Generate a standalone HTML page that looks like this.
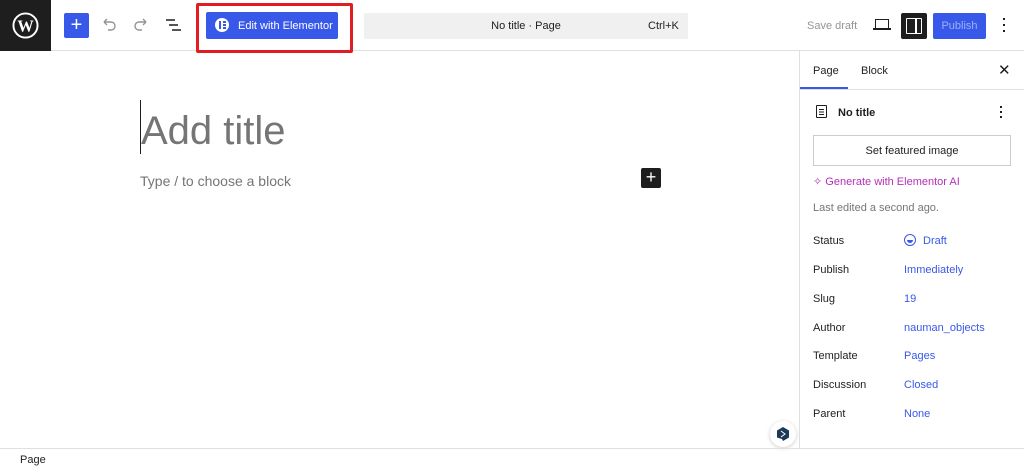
<!DOCTYPE html>
<html><head><style>
*{box-sizing:border-box;margin:0;padding:0}
body{width:1024px;height:468px;overflow:hidden;background:#fff;font-family:"Liberation Sans",sans-serif;color:#1e1e1e;position:relative}
.a{position:absolute}
.top{left:0;top:0;width:1024px;height:51px;border-bottom:1px solid #e0e0e0}
.side{left:799px;top:51px;width:1px;height:397px;background:#e0e0e0}
.foot{left:0;top:448px;width:1024px;height:1px;background:#e0e0e0}
.lbl{font-size:11px;color:#1e1e1e}
.val{font-size:11px;color:#3858e9}
</style></head><body>
<div class="a top"></div>
<div class="a" style="left:0;top:0;width:51px;height:51px;background:#1e1e1e"></div>
<svg class="a" style="left:12px;top:12px" width="27" height="27" viewBox="0 0 28 28"><circle cx="14" cy="14" r="12.5" fill="none" stroke="#fff" stroke-width="2"/><text x="14" y="20" fill="#fff" font-size="17" font-weight="bold" text-anchor="middle" font-family="Liberation Serif">W</text></svg>
<div class="a" style="left:64px;top:13px;width:25px;height:25px;background:#3858e9;border-radius:2px;color:#fff;font-size:20px;line-height:24px;text-align:center">+</div>
<svg class="a" style="left:100px;top:16px" width="18" height="18" viewBox="0 0 18 18"><path d="M4 6h7a4 4 0 010 8H8M4 6l3-3M4 6l3 3" stroke="#949494" stroke-width="1.4" fill="none"/></svg>
<svg class="a" style="left:132px;top:16px" width="18" height="18" viewBox="0 0 18 18"><path d="M14 6H7a4 4 0 000 8h3M14 6l-3-3M14 6l-3 3" stroke="#949494" stroke-width="1.4" fill="none"/></svg>
<svg class="a" style="left:164px;top:17px" width="18" height="16" viewBox="0 0 18 16"><path d="M2 3h9M5 8h9M8 13h9" stroke="#1e1e1e" stroke-width="1.6"/></svg>
<div class="a" style="left:196px;top:3px;width:157px;height:50px;border:3px solid #e31b23;border-radius:2px"></div>
<div class="a" style="left:206px;top:12px;width:132px;height:27px;background:#3858e9;border-radius:2px;color:#fff;font-size:11px;padding-left:32px;display:flex;align-items:center">Edit with Elementor</div>
<div class="a" style="left:215px;top:18px;width:14px;height:14px;border-radius:50%;background:#fff"></div>
<div class="a" style="left:219px;top:21px;width:2px;height:8px;background:#3858e9"></div>
<div class="a" style="left:223px;top:21px;width:3px;height:2px;background:#3858e9;box-shadow:0 3px 0 #3858e9,0 6px 0 #3858e9"></div>
<div class="a" style="left:364px;top:13px;width:324px;height:26px;background:#f0f0f0;border-radius:2px;font-size:11px;display:flex;align-items:center;justify-content:center">No title · Page</div>
<div class="a" style="left:648px;top:13px;height:26px;font-size:11px;display:flex;align-items:center">Ctrl+K</div>
<div class="a" style="left:807px;top:13px;height:26px;font-size:11px;display:flex;align-items:center;color:#949494">Save draft</div>
<div class="a" style="left:875px;top:19px;width:14px;height:10px;border:1.5px solid #1e1e1e;border-bottom:none"></div>
<div class="a" style="left:873px;top:28px;width:18px;height:1.5px;background:#1e1e1e"></div>
<div class="a" style="left:901px;top:13px;width:26px;height:26px;background:#1e1e1e;border-radius:2px"></div>
<div class="a" style="left:906px;top:18px;width:16px;height:16px;border:1.5px solid #fff;border-radius:1px"></div>
<div class="a" style="left:915px;top:18px;width:1.5px;height:16px;background:#fff"></div>
<div class="a" style="left:933px;top:13px;width:53px;height:26px;background:#3858e9;border-radius:2px;color:#9fb1f5;font-size:11px;display:flex;align-items:center;justify-content:center">Publish</div>
<div class="a" style="left:1003px;top:18px;width:2px;height:2px;background:#1e1e1e;box-shadow:0 6px 0 #1e1e1e,0 12px 0 #1e1e1e"></div>

<div class="a" style="left:140px;top:100px;width:1px;height:54px;background:#1e1e1e"></div>
<div class="a" style="left:141px;top:107px;font-size:40px;color:#757575;line-height:48px">Add title</div>
<div class="a" style="left:140px;top:173px;font-size:14px;color:#757575">Type / to choose a block</div>
<div class="a" style="left:641px;top:168px;width:20px;height:20px;background:#1e1e1e;border-radius:2px;color:#fff;font-size:18px;line-height:19px;text-align:center">+</div>

<div class="a side"></div>
<div class="a" style="left:800px;top:89px;width:224px;height:1px;background:#e0e0e0"></div>
<div class="a" style="left:813px;top:65px;font-size:11px">Page</div>
<div class="a" style="left:800px;top:87px;width:48px;height:2px;background:#3858e9"></div>
<div class="a" style="left:861px;top:65px;font-size:11px">Block</div>
<div class="a" style="left:998px;top:61px;font-size:15px">✕</div>
<div class="a" style="left:816px;top:105px;width:11px;height:13px;border:1.5px solid #1e1e1e;border-radius:1px"></div>
<div class="a" style="left:819px;top:109px;width:5px;height:1px;background:#1e1e1e;box-shadow:0 2.5px 0 #1e1e1e,0 5px 0 #1e1e1e"></div>
<div class="a" style="left:838px;top:107px;font-size:11px;font-weight:bold">No title</div>
<div class="a" style="left:1000px;top:106px;width:2px;height:2px;background:#1e1e1e;box-shadow:0 5px 0 #1e1e1e,0 10px 0 #1e1e1e"></div>
<div class="a" style="left:813px;top:135px;width:198px;height:31px;border:1px solid #ccc;font-size:11px;display:flex;align-items:center;justify-content:center">Set featured image</div>
<div class="a" style="left:813px;top:175px;font-size:11px;color:#b42fb8">✧ Generate with Elementor AI</div>
<div class="a" style="left:813px;top:202px;font-size:11px;color:#757575">Last edited a second ago.</div>
<div class="a lbl" style="left:813px;top:235px">Status</div>
<div class="a" style="left:904px;top:234px;width:12px;height:12px;border:1.5px solid #3858e9;border-radius:50%"></div>
<div class="a" style="left:907px;top:240px;width:6px;height:3px;background:#3858e9;border-radius:0 0 3px 3px"></div>
<div class="a val" style="left:923px;top:235px">Draft</div>
<div class="a lbl" style="left:813px;top:264px">Publish</div><div class="a val" style="left:904px;top:264px">Immediately</div>
<div class="a lbl" style="left:813px;top:293px">Slug</div><div class="a val" style="left:904px;top:293px">19</div>
<div class="a lbl" style="left:813px;top:322px">Author</div><div class="a val" style="left:904px;top:322px">nauman_objects</div>
<div class="a lbl" style="left:813px;top:350px">Template</div><div class="a val" style="left:904px;top:350px">Pages</div>
<div class="a lbl" style="left:813px;top:379px">Discussion</div><div class="a val" style="left:904px;top:379px">Closed</div>
<div class="a lbl" style="left:813px;top:408px">Parent</div><div class="a val" style="left:904px;top:408px">None</div>
<div class="a" style="left:770px;top:421px;width:26px;height:26px;border-radius:50%;background:#fff;box-shadow:0 1px 4px rgba(0,0,0,.2)"></div>
<svg class="a" style="left:775px;top:426px" width="16" height="16" viewBox="0 0 16 16"><path d="M8 1l6 3.5v7L8 15l-1-2-5-1.5v-7z" fill="#1b3a57"/><path d="M6 5l4 3-4 3" stroke="#fff" stroke-width="1" fill="none"/></svg>
<div class="a foot"></div>
<div class="a" style="left:20px;top:454px;font-size:11px">Page</div>
</body></html>
